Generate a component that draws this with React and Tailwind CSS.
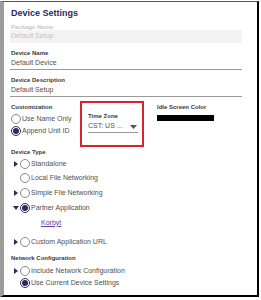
import React from "react";

const NAVY = "#2e2a5b";

function Radio({ checked }) {
  return checked ? (
    <span className="w-[10px] h-[10px] rounded-full border border-[#2e2a5b] flex items-center justify-center shrink-0 bg-white">
      <span className="w-[6px] h-[6px] rounded-full bg-[#2e2a5b]" />
    </span>
  ) : (
    <span className="w-[10px] h-[10px] rounded-full border border-[#8a8a8a] shrink-0 bg-white" />
  );
}

function Tri({ dir }) {
  if (dir === "right")
    return (
      <svg width="4" height="6" viewBox="0 0 4 6">
        <polygon points="0,0 4,3 0,6" fill={NAVY} />
      </svg>
    );
  if (dir === "down")
    return (
      <svg width="6" height="4" viewBox="0 0 6 4">
        <polygon points="0,0 6,0 3,4" fill={NAVY} />
      </svg>
    );
  return null;
}

function TypeRow({ tri, checked, label, className = "" }) {
  return (
    <div className={"flex items-center h-[12px] " + className}>
      <span className="w-[9px] flex justify-center items-center">
        <Tri dir={tri} />
      </span>
      <Radio checked={checked} />
      <span className="ml-[1px] text-[7px] leading-[12px] text-[#505050]">{label}</span>
    </div>
  );
}

function Label({ children, className = "" }) {
  return (
    <div className={"h-[8px] flex items-center text-[6px] font-bold text-[#3a3a3a] leading-[8px] " + className}>
      {children}
    </div>
  );
}

export default function App() {
  return (
    <div className="w-[261px] h-[300px] bg-white pt-px font-['Liberation_Sans',Arial,sans-serif]">
      <div className="w-[259px] h-[296px] border-t border-t-[#555] border-l-4 border-l-[#9c9c9c] border-r-2 border-r-black border-b-2 border-b-black overflow-hidden">
        <div className="pl-[7px]">
          <div className="mt-[5px] h-[12px] leading-[12px] text-[9px] font-bold text-[#2e2a5b]">
            Device Settings
          </div>
          <div className="mt-[5px] h-[6px] flex items-center text-[6px] font-bold text-[#c8c8c8] leading-[6px]">
            Package Name
          </div>
          <div className="-ml-[1px] w-[232px] h-[13px] bg-[#f3f3f3] flex items-center pl-[1px] text-[7px] text-[#c4c4c4]">
            Default Setup
          </div>
          <Label className="mt-[6px]">Device Name</Label>
          <div className="-ml-[1px] w-[232px] h-[13px] border-b border-b-[#9a9a9a] pl-[1px] text-[7px] leading-[12px] text-[#505050]">
            Default Device
          </div>
          <Label className="mt-[6px]">Device Description</Label>
          <div className="-ml-[1px] w-[232px] h-[13px] border-b border-b-[#9a9a9a] pl-[1px] text-[7px] leading-[12px] text-[#505050]">
            Default Setup
          </div>

          <div className="flex h-[50px]">
            <div className="w-[69px]">
              <Label className="mt-[6px]">Customization</Label>
              <div className="mt-[2px] flex items-center h-[12px]">
                <Radio />
                <span className="ml-[1px] text-[7px] text-[#505050]">Use Name Only</span>
              </div>
              <div className="flex items-center h-[12px]">
                <Radio checked />
                <span className="ml-[1px] text-[7px] text-[#505050]">Append Unit ID</span>
              </div>
            </div>
            <div className="mt-[4px] w-[64px] h-[46px] border-2 border-[#d9222e] pl-[6px] pt-[9px]">
              <Label>Time Zone</Label>
              <div className="mt-[1px] w-[50px] h-[12px] border-b border-b-[#9a9a9a] flex items-center justify-between">
                <span className="text-[7px] text-[#505050]">CST: US ...</span>
                <svg width="7" height="4" viewBox="0 0 7 4" className="mr-[1px]">
                  <polygon points="0,0 7,0 3.5,4" fill="#555" />
                </svg>
              </div>
            </div>
            <div className="ml-[13px]">
              <Label className="mt-[6px]">Idle Screen Color</Label>
              <div className="mt-[4px] w-[57px] h-[6px] bg-black" />
            </div>
          </div>

          <Label className="mt-[1px]">Device Type</Label>
          <TypeRow tri="right" label="Standalone" className="mt-[2px]" />
          <TypeRow label="Local File Networking" className="mt-[2px]" />
          <TypeRow tri="right" label="Simple File Networking" className="mt-[3px]" />
          <TypeRow tri="down" checked label="Partner Application" className="mt-[3px]" />
          <div className="mt-[3px] h-[12px] flex items-center pl-[30px]">
            <span className="text-[7px] text-[#5b3f9e] underline">Korbyt</span>
          </div>
          <TypeRow tri="right" label="Custom Application URL" className="mt-[7px]" />
          <Label className="mt-[6px]">Network Configuration</Label>
          <TypeRow tri="right" label="Include Network Configuration" className="mt-[3px] !h-[11px]" />
          <TypeRow checked label="Use Current Device Settings" className="mt-[1px] !h-[11px]" />
        </div>
      </div>
    </div>
  );
}
